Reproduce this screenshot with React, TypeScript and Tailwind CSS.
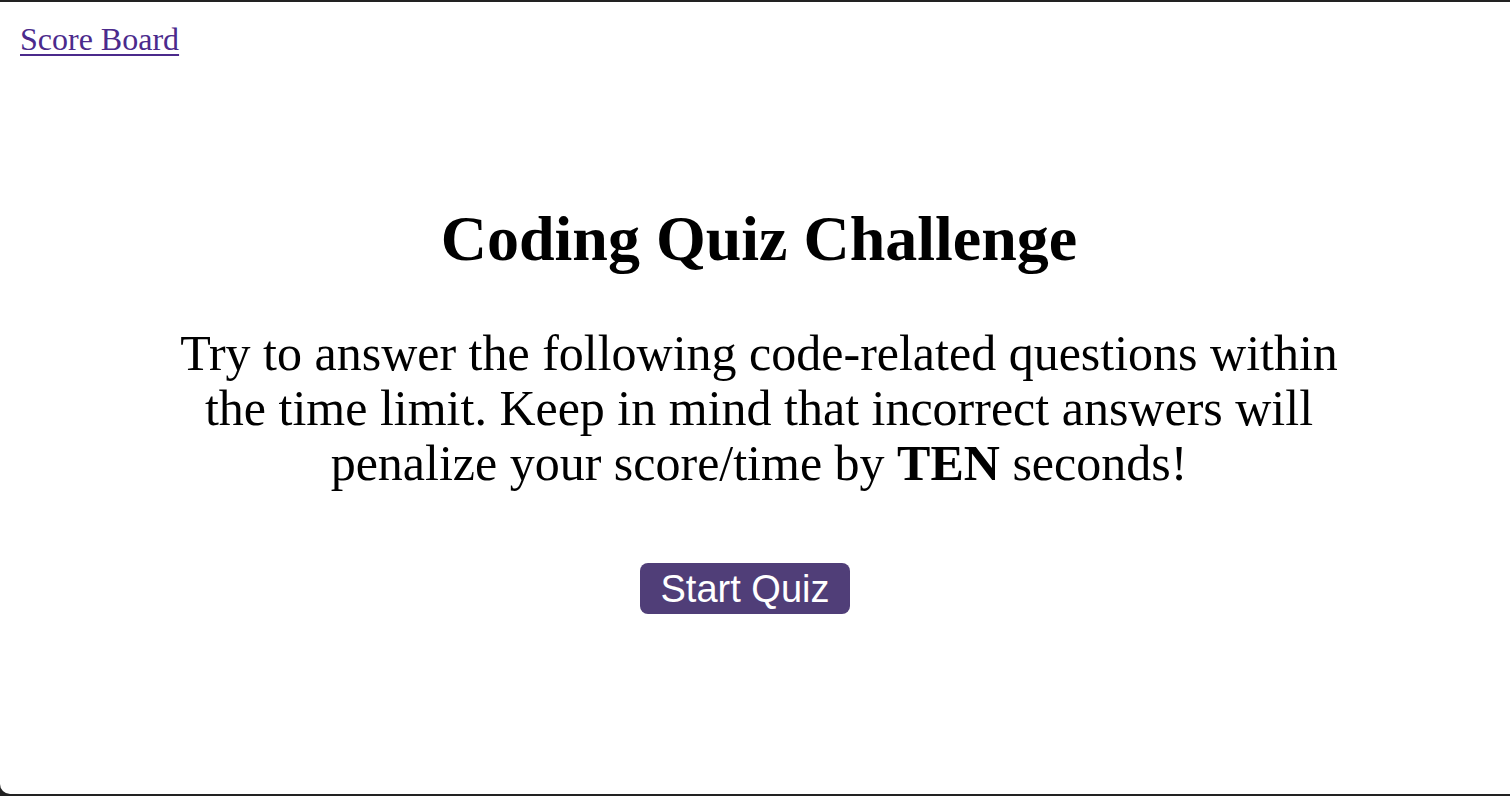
export default function App() {
  return (
    <div className="h-[796px] w-full bg-[#222222] py-[2px]">
      <div className="flex h-full flex-col rounded-bl-[10px] bg-white font-['Liberation_Serif','Times_New_Roman',serif] text-black">
        <header className="px-[20px] pt-[19px]">
          <a href="#" className="text-[32px] leading-[37px] text-[#4b2a8c] underline decoration-[2px] underline-offset-[4px]">
            Score Board
          </a>
        </header>

        <main className="ml-[169px] mt-[144px] flex w-[1180px] flex-col items-center">
          <h1 className="text-center text-[64px] font-bold leading-[74px]">Coding Quiz Challenge</h1>
          <p className="mt-[50px] text-center text-[50px] leading-[55px]">
            Try to answer the following code-related questions within the time limit. Keep in mind that incorrect
            answers will penalize your score/time by <strong className="font-bold">TEN</strong> seconds!
          </p>
          <div className="mt-[72px] flex w-full justify-center pr-[28px]">
            <button className="h-[51px] w-[210px] rounded-[8px] bg-[#503e78] font-['Liberation_Sans',Arial,sans-serif] text-[38px] leading-[44px] text-white">
              Start Quiz
            </button>
          </div>
        </main>
      </div>
    </div>
  );
}
